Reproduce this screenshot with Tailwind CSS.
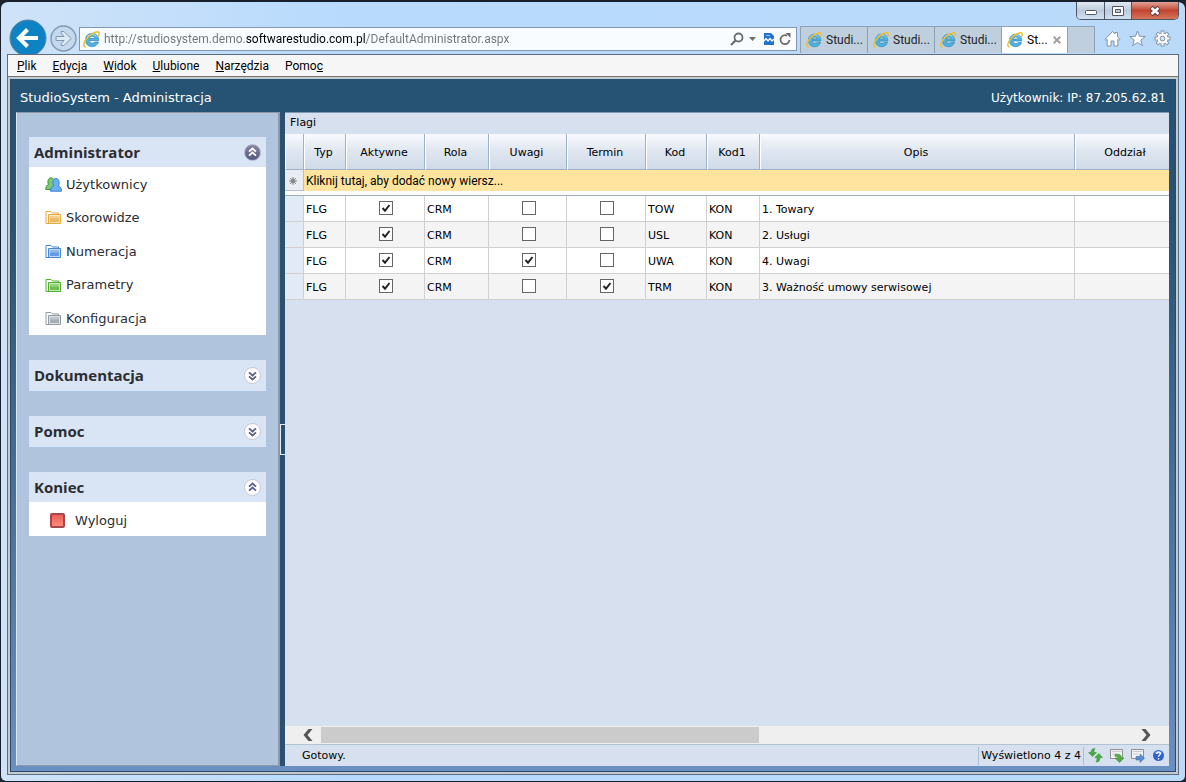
<!DOCTYPE html>
<html lang="pl">
<head>
    <meta charset="UTF-8">
    <meta name="viewport" content="width=device-width, initial-scale=1.0">
    <title>StudioSystem - Administracja</title>
    <script src="https://cdn.jsdelivr.net/npm/@tailwindcss/browser@4"></script>
</head>
<body class="bg-[#1c2430] font-['DejaVu_Sans',Verdana,sans-serif] text-[11px] text-black">

    <!-- shared icons -->
    <svg class="hidden">
        <symbol id="ie" viewBox="0 0 16 16">
            <path d="M8.600 2.200c3.700 0 6.200 2.600 6.200 6.800H6c.2 1.700 1.300 2.500 2.800 2.500 1.100 0 1.900-.4 2.400-1.100h3.300c-.8 2.700-3 4.300-5.900 4.300-3.700 0-6.200-2.500-6.200-6.200s2.500-6.300 6.200-6.300zM6.100 7h5.100c-.2-1.300-1.200-2.100-2.500-2.100S6.400 5.700 6.100 7z" fill="#4fb2e0" stroke="#2f86b8" stroke-width=".7"/>
            <path d="M4 5.500C5.200 4 6.700 3.200 8.600 3.200s3.500.8 4.400 2.300" fill="none" stroke="#9bdcf6"/>
            <path d="M2.600 15C-.6 14.600.8 9.400 5.200 5.200 9.400 1.200 14.600-.4 15.200 1.800c.3 1-.2 2.200-.9 3.400" fill="none" stroke="#f0c030" stroke-width="1.500"/>
        </symbol>
        <symbol id="folder" viewBox="0 0 17 15">
            <path d="M1 13.500V1.500h5l1.500 1.500h6V5" fill="#fff" fill-opacity=".5" stroke="currentColor"/>
            <path d="M3.500 13.500v-9h12v9H1" fill="currentColor" fill-opacity=".3" stroke="currentColor"/>
            <rect x="5" y="6" width="9" height="6" fill="currentColor" fill-opacity=".75"/>
            <path d="M5 6h9v2.500H5z" fill="#fff" fill-opacity=".3"/>
        </symbol>
        <symbol id="up" viewBox="0 0 9 10">
            <path d="M1 4.600 4.500 1.500 8 4.600M1 8.600 4.500 5.500 8 8.600" fill="none" stroke="currentColor" stroke-width="1.700"/>
        </symbol>
        <symbol id="down" viewBox="0 0 9 10">
            <path d="M1 1.400 4.500 4.500 8 1.400M1 5.400 4.500 8.500 8 5.400" fill="none" stroke="currentColor" stroke-width="1.700"/>
        </symbol>
    </svg>

    <div class="relative flex h-screen flex-col rounded-t-lg rounded-b-md border border-t-2 border-[#17202c] bg-linear-to-r from-[#cfe3f8] via-[#b7dafd] via-30% to-[#bbdafa] px-[6px] pb-[6px] font-normal">

        <!-- window buttons -->
        <div class="absolute right-[6px] top-0 flex h-[18px] overflow-hidden rounded-b-[5px] border border-t-0 border-[#4b5667]">
            <button aria-label="Minimalizuj" class="flex w-[28px] items-center justify-center border-r border-[#4b5667] bg-linear-to-b from-[#e1e9f2] via-[#bccbdc] to-[#d2e1f1]">
                <svg class="size-3" viewBox="0 0 12 12"><rect x=".5" y="5.500" width="11" height="4" rx="1" fill="#fff" stroke="#535666"/></svg>
            </button>
            <button aria-label="Maksymalizuj" class="flex w-[27px] items-center justify-center border-r border-[#4b5667] bg-linear-to-b from-[#e1e9f2] via-[#bccbdc] to-[#d2e1f1]">
                <svg class="size-3" viewBox="0 0 12 12"><path d="M.5 1.500h11v9H.5zM3.500 4.500h5v3h-5z" fill="#fff" fill-rule="evenodd" stroke="#535666"/></svg>
            </button>
            <button aria-label="Zamknij" class="flex w-[46px] items-center justify-center bg-linear-to-b from-[#dea296] via-[#c24430] to-[#d5755a]">
                <svg class="size-3" viewBox="0 0 12 12"><path d="M2 2.500l8 7M10 2.500l-8 7" stroke="#5a3a44" stroke-width="4.400"/><path d="M2.500 3l7 6M9.500 3l-7 6" stroke="#fff" stroke-width="2.600"/></svg>
            </button>
        </div>

        <!-- navigation row -->
        <header class="flex h-[52px] shrink-0 items-end font-[Roboto,'Open_Sans',sans-serif] text-xs">
            <button aria-label="Wstecz" class="ml-[2px] h-[35px] w-[38px] shrink-0 overflow-hidden">
                <svg class="size-[38px]" viewBox="0 0 38 38"><circle cx="19" cy="19" r="18" fill="#0d83c3" stroke="#5b7f9d"/><path d="M29 19H11M18.500 10.500 10 19l8.500 8.500" fill="none" stroke="#fff" stroke-width="4"/></svg>
            </button>
            <button aria-label="Dalej" class="ml-[3px] mb-[2px] shrink-0">
                <svg class="size-[27px]" viewBox="0 0 27 27"><circle cx="13.500" cy="13.500" r="12.500" fill="#c5d9ee" stroke="#8298b0" stroke-width="1.400"/><path d="M6 11.500h8L11 8V6.500h3l7 7-7 7h-3V19l3-3.500H6z" fill="#dce9f6" stroke="#8298b0"/></svg>
            </button>
            <div class="ml-[2px] mb-[3px] flex h-6 flex-1 items-center border border-[#8398b0] bg-[#f8fcff] pl-[3px] pr-[5px]">
                <svg class="size-[17px]"><use href="#ie"/></svg>
                <input aria-label="Adres" value="http://studiosystem.demo.softwarestudio.com.pl/DefaultAdministrator.aspx" class="ml-1 min-w-0 flex-1 bg-[linear-gradient(90deg,#747474_142px,#000_142px,#000_262px,#747474_262px)] bg-clip-text text-transparent outline-none">
                <button aria-label="Szukaj"><svg class="size-[14px]" viewBox="0 0 14 14"><circle cx="8.500" cy="5.500" r="4" fill="none" stroke="#6d6d6d" stroke-width="1.800"/><path d="M5.500 8.500 1 13" stroke="#6d6d6d" stroke-width="2.200"/></svg></button>
                <button aria-label="Historia" class="ml-[5px]"><svg class="h-1 w-[7px]" viewBox="0 0 7 4"><path d="M0 0h7L3.500 4z" fill="#6d6d6d"/></svg></button>
                <button aria-label="Widok zgodności" class="ml-2"><svg class="h-3 w-[10px]" viewBox="0 0 10 12"><path d="M0 0h7l3 3v9H0z" fill="#2173cf"/><path d="M2 2.500h4" stroke="#9cc8f5"/><path d="M0 8l2-2.500 2 2.500 2-2.500 2 2.500 2-2" fill="none" stroke="#fff" stroke-width="1.300"/></svg></button>
                <button aria-label="Odśwież" class="ml-[5px]"><svg class="size-3" viewBox="0 0 12 12"><path d="M10.500 7A4.500 4.500 0 1 1 8 2.600" fill="none" stroke="#6d6d6d" stroke-width="1.800"/><path d="M6.500 0h5v5z" fill="#6d6d6d"/></svg></button>
            </div>
            <nav class="ml-[3px] flex h-[28px] shrink-0 pb-px text-[#222]">
                <button class="flex w-[67px] items-center gap-1 border border-r-0 border-b-0 border-[#8ea2b7] bg-[#bfcfde] pl-[5px]"><svg class="size-4 shrink-0"><use href="#ie"/></svg>Studi...</button>
                <button class="flex w-[67px] items-center gap-1 border border-r-0 border-b-0 border-[#8ea2b7] bg-[#bfcfde] pl-[5px]"><svg class="size-4 shrink-0"><use href="#ie"/></svg>Studi...</button>
                <button class="flex w-[67px] items-center gap-1 border border-r-0 border-b-0 border-[#8ea2b7] bg-[#bfcfde] pl-[5px]"><svg class="size-4 shrink-0"><use href="#ie"/></svg>Studi...</button>
                <button class="flex w-[66px] items-center gap-1 border border-r-0 border-b-0 border-[#8ea2b7] bg-white pl-[5px] text-black"><svg class="size-4 shrink-0"><use href="#ie"/></svg>St...<svg class="ml-auto mr-[6px] size-2" viewBox="0 0 8 8"><path d="M.7.7l6.600 6.600M7.300.7.7 7.300" stroke="#a0a0a0" stroke-width="2"/></svg></button>
                <button aria-label="Nowa karta" class="w-7 border border-b-0 border-[#8ea2b7] bg-[#bfcfde]"></button>
            </nav>
            <div class="mb-[7px] ml-[9px] mr-[8px] flex shrink-0 gap-2">
                <button aria-label="Strona główna"><svg class="size-[17px]" viewBox="0 0 17 17"><path d="M1 9.500 8.500 1.500l2.500 2.600V2.500h2.500v4.300L16 9.500l-1 .9-1.200-1V16H10v-5H7v5H3.200V9.400l-1.200 1z" fill="#fff" stroke="#8293a6"/></svg></button>
                <button aria-label="Ulubione"><svg class="size-[17px]" viewBox="0 0 17 17"><path d="M8.500 1l2 5.300 5.800.2-4.500 3.600 1.600 5.600-4.900-3.200-4.900 3.200 1.600-5.600L.7 6.500l5.800-.2z" fill="#fff" stroke="#8293a6"/></svg></button>
                <button aria-label="Narzędzia"><svg class="size-[17px]" viewBox="0 0 17 17"><path d="M8.500 .5v16M.5 8.500h16M2.800 2.800l11.400 11.400M14.200 2.800 2.800 14.200" stroke="#8293a6" stroke-width="3.800"/><circle cx="8.500" cy="8.500" r="5.400" fill="#fff" stroke="#8293a6"/><path d="M8.500 1.500v14M1.500 8.500h14M3.500 3.500l10 10M13.500 3.500l-10 10" stroke="#fff" stroke-width="2"/><circle cx="8.500" cy="8.500" r="2.400" fill="#d5e3f2" stroke="#8293a6"/></svg></button>
            </div>
        </header>

        <div class="flex min-h-0 flex-1 flex-col border border-[#5c6d80] bg-[#f6f6f7]">
            <nav class="flex h-[22px] shrink-0 items-center gap-4 border-b border-[#73736e] pl-[9px] font-[Roboto,'Open_Sans',sans-serif] text-xs">
                <a href="#"><u>P</u>lik</a>
                <a href="#"><u>E</u>dycja</a>
                <a href="#"><u>W</u>idok</a>
                <a href="#"><u>U</u>lubione</a>
                <a href="#"><u>N</u>arzędzia</a>
                <a href="#">Pomo<u>c</u></a>
            </nav>

            <div class="flex min-h-0 flex-1 flex-col border-2 border-[#c3cbd0] bg-linear-to-b from-[#265373] from-20% to-[#6a8fc2]">
                <div class="flex min-h-0 flex-1 flex-col border border-t-0 border-[#2d4a66]">
                    <div class="flex h-[33px] shrink-0 items-center justify-between px-[9px] pt-1 text-white">
                        <h1 class="text-[13px]">StudioSystem - Administracja</h1>
                        <span class="text-xs">Użytkownik: IP: 87.205.62.81</span>
                    </div>

                    <div class="flex min-h-0 flex-1 pb-[5px] pl-[5px] pr-[6px]">
                        <!-- sidebar -->
                        <aside class="flex w-[264px] shrink-0 flex-col gap-[25px] border border-r-2 border-[#8d99aa] border-l-[#dfe8f2] bg-[#b0c4de] px-3 pt-6 text-[#2b2d33]">
                            <section>
                                <div class="flex h-[30px] items-center justify-between bg-[#d9e4f4] px-[5px]">
                                    <h2 class="font-['Open_Sans','Noto_Sans',sans-serif] text-[15px] font-bold">Administrator</h2>
                                    <button aria-label="Zwiń Administrator" class="flex size-[17px] items-center justify-center rounded-full border border-[#b5b7cc] bg-linear-to-b from-[#8587a3] to-[#55577e] text-white"><svg class="h-[10px] w-[9px]"><use href="#up"/></svg></button>
                                </div>
                                <ul class="grid h-[168px] grid-rows-5 bg-white pl-4 text-[13px]">
                                    <li><a href="#" class="flex h-full items-center gap-1 pt-px"><svg class="h-[15px] w-[17px]" viewBox="0 0 17 15"><path d="M.7 12.500c0-3 1.300-4.500 2.800-5C2 4 3.500.8 6 .8S10 4 8.500 7l1 5.500z" fill="#7bc96b" stroke="#3d9a3a"/><path d="M5.500 14.200c0-3.200 1.500-4.700 3-5.200C7 5.500 8 1.500 11 1.500S15 5.500 13.500 9c1.700.5 3 2 3 5.200z" fill="#6eb0f5" stroke="#3b82d6"/></svg>Użytkownicy</a></li>
                                    <li><a href="#" class="flex h-full items-center gap-1 pt-px"><svg class="h-[15px] w-[17px] text-[#e9a93c]"><use href="#folder"/></svg>Skorowidze</a></li>
                                    <li><a href="#" class="flex h-full items-center gap-1 pt-px"><svg class="h-[15px] w-[17px] text-[#4388d8]"><use href="#folder"/></svg>Numeracja</a></li>
                                    <li><a href="#" class="flex h-full items-center gap-1 pt-px"><svg class="h-[15px] w-[17px] text-[#50b02a]"><use href="#folder"/></svg>Parametry</a></li>
                                    <li><a href="#" class="flex h-full items-center gap-1 pt-px"><svg class="h-[15px] w-[17px] text-[#929ba6]"><use href="#folder"/></svg>Konfiguracja</a></li>
                                </ul>
                            </section>
                            <section class="flex h-[31px] items-center justify-between bg-[#d9e4f4] px-[5px]">
                                <h2 class="font-['Open_Sans','Noto_Sans',sans-serif] text-[15px] font-bold">Dokumentacja</h2>
                                <button aria-label="Rozwiń Dokumentacja" class="flex size-[17px] items-center justify-center rounded-full border border-[#c3c7d6] bg-white text-[#5a5f8c]"><svg class="h-[10px] w-[9px]"><use href="#down"/></svg></button>
                            </section>
                            <section class="flex h-[31px] items-center justify-between bg-[#d9e4f4] px-[5px]">
                                <h2 class="font-['Open_Sans','Noto_Sans',sans-serif] text-[15px] font-bold">Pomoc</h2>
                                <button aria-label="Rozwiń Pomoc" class="flex size-[17px] items-center justify-center rounded-full border border-[#c3c7d6] bg-white text-[#5a5f8c]"><svg class="h-[10px] w-[9px]"><use href="#down"/></svg></button>
                            </section>
                            <section>
                                <div class="flex h-[30px] items-center justify-between bg-[#d9e4f4] px-[5px]">
                                    <h2 class="font-['Open_Sans','Noto_Sans',sans-serif] text-[15px] font-bold">Koniec</h2>
                                    <button aria-label="Zwiń Koniec" class="flex size-[17px] items-center justify-center rounded-full border border-[#c3c7d6] bg-white text-[#5a5f8c]"><svg class="h-[10px] w-[9px]"><use href="#up"/></svg></button>
                                </div>
                                <a href="#" class="flex h-[34px] items-center gap-[10px] bg-white pl-[21px] pt-[3px] text-[13px]"><span class="size-[15px] rounded-xs border-2 border-[#a8474a] bg-linear-to-b from-[#e8605a] to-[#ff8a78]"></span>Wyloguj</a>
                            </section>
                        </aside>

                        <!-- splitter -->
                        <div class="flex w-[5px] shrink-0 items-center bg-[#2c5170]">
                            <div class="h-[31px] w-full border border-r-0 border-[#e5ecf2]"></div>
                        </div>

                        <!-- grid -->
                        <main class="flex min-w-0 flex-1 flex-col border-t border-[#7f98b4] bg-[#d7e0ee]">
                            <div class="flex h-[21px] shrink-0 items-center pl-[5px]">Flagi</div>
                            <div class="min-h-0 flex-1 overflow-hidden">
                                <table class="w-full min-w-[893px] table-fixed border-separate border-spacing-0 text-left">
                                    <colgroup>
                                        <col class="w-[19px]"><col class="w-[42px]"><col class="w-[79px]"><col class="w-[64px]"><col class="w-[78px]"><col class="w-[79px]"><col class="w-[61px]"><col class="w-[53px]"><col class="w-[315px]"><col>
                                    </colgroup>
                                    <thead>
                                        <tr class="h-9 text-center *:border-r *:border-b *:border-l *:border-l-white *:border-[#9fb2c4] *:bg-linear-to-b *:from-[#f8fafd] *:via-[#dfe6f0] *:to-[#cfdae8] *:p-0 *:pt-[3px] *:pr-[3px] *:font-normal">
                                            <th></th><th>Typ</th><th>Aktywne</th><th>Rola</th><th>Uwagi</th><th>Termin</th><th>Kod</th><th>Kod1</th><th>Opis</th><th>Oddział</th>
                                        </tr>
                                        <tr class="h-[21px]">
                                            <td class="border-r border-b border-[#b4c0cd] bg-[#e9edf3] p-0 pr-[2px] pt-[2px]">
                                                <svg class="mx-auto size-2" viewBox="0 0 8 8"><circle cx="4" cy="4" r="2.400" fill="#8a8a8a"/><path d="M4 0v8M0 4h8M1 1l6 6M7 1 1 7" stroke="#8a8a8a"/></svg>
                                            </td>
                                            <td colspan="9" class="bg-[#ffe4a0] p-0 pl-[2px] pt-px font-[Roboto,'Open_Sans',sans-serif] text-xs leading-4">Kliknij tutaj, aby dodać nowy wiersz...</td>
                                        </tr>
                                        <tr class="h-[5px]"><td colspan="10" class="border-b border-[#9fadb5] bg-[#fbfcfa] p-0"></td></tr>
                                    </thead>
                                    <tbody id="rows"></tbody>
                                </table>
                            </div>

                            <div class="flex h-[18px] shrink-0 items-center bg-[#efefef]">
                                <button aria-label="Przewiń w lewo" class="flex w-9 justify-end pr-2"><svg class="h-3 w-[10px]" viewBox="0 0 10 12"><path d="M5.500 0H9.500L4.500 6l5 6H5.500L.5 6z" fill="#555"/></svg></button>
                                <div class="h-[16px] flex-1"><div class="h-full w-[54%] bg-[#cbcbcb]"></div></div>
                                <button aria-label="Przewiń w prawo" class="flex w-9 pl-2"><svg class="h-3 w-[10px]" viewBox="0 0 10 12"><path d="M4.500 0H.5L5.500 6l-5 6h4L9.500 6z" fill="#555"/></svg></button>
                            </div>

                            <footer class="flex h-[22px] shrink-0 items-center justify-between border-t border-[#b3c3d6] pl-[17px] pr-[3px]">
                                <span class="pt-px">Gotowy.</span>
                                <div class="flex h-[18px] items-center">
                                    <span class="flex h-full items-center border-x border-[#a9bfd9] px-[2px] pt-px">Wyświetlono 4 z 4</span>
                                    <div class="ml-1 flex gap-[6px]">
                                        <button aria-label="Odśwież dane"><svg class="size-[15px]" viewBox="0 0 15 15"><path d="M7 .5C4 .5 3 2 3 4.500H.5l4 4 4-4H6C6 2.500 6.200 1.500 7 .5zM8 14c3 0 4-1.500 4-4.500h2.500l-3.700-4-4 4H9c0 2-.2 3.500-1 4.500z" fill="#4aad40" stroke="#2d8a2c" stroke-width=".5"/></svg></button>
                                        <button aria-label="Eksportuj"><svg class="size-[15px]" viewBox="0 0 15 15"><path d="M1.500 10.500v-9h12v9z" fill="#f1f1f1" stroke="#8d9093"/><path d="M3 3.500h9M3 6h5" stroke="#c9cccf"/><path d="M6 6.500c4-1 6.500 0 6.500 3.500H15l-4.500 4.500L6 10h2.800c0-1.500-1-2-2.800-1.500z" fill="#56aa45" stroke="#2f8030" stroke-width=".5"/></svg></button>
                                        <button aria-label="Wyślij"><svg class="size-[15px]" viewBox="0 0 15 15"><path d="M1.500 10.500v-9h12v9z" fill="#f1f1f1" stroke="#8d9093"/><path d="M3 3.500h9M3 6h5" stroke="#c9cccf"/><path d="M6 8.500h4V6l4.500 4.200L10 14.500V12H6z" fill="#5a8ed2" stroke="#37619e" stroke-width=".5"/></svg></button>
                                        <button aria-label="Pomoc"><svg class="size-[15px]" viewBox="0 0 15 15"><circle cx="7.500" cy="7.500" r="5.500" fill="#2e62d2"/><path d="M3.500 5.500a4.500 4.500 0 0 1 8 0z" fill="#86adf2"/><path d="M5.700 6c0-2.600 3.800-2.400 3.600-.3C9.200 7 7.500 7 7.500 8.800M7.500 10v1.400" fill="none" stroke="#fff" stroke-width="1.400"/></svg></button>
                                    </div>
                                </div>
                            </footer>
                        </main>
                    </div>
                </div>
            </div>
        </div>
    </div>

    <script>
        const flags = [
            { aktywne: true, uwagi: false, termin: false, kod: "TOW", opis: "1. Towary" },
            { aktywne: true, uwagi: false, termin: false, kod: "USL", opis: "2. Usługi" },
            { aktywne: true, uwagi: true, termin: false, kod: "UWA", opis: "4. Uwagi" },
            { aktywne: true, uwagi: false, termin: true, kod: "TRM", opis: "3. Ważność umowy serwisowej" }
        ];

        function checkbox(label, on) {
            return `<td><label class="relative mx-auto -mt-[5px] block size-[14px]">
                <input type="checkbox" aria-label="${label}" ${on ? "checked" : ""} class="peer block size-[14px] appearance-none border border-[#666] bg-white">
                <svg class="pointer-events-none absolute inset-0 hidden size-[14px] peer-checked:block" viewBox="0 0 14 14"><path d="M3.500 7 6 9.700 10.500 4" fill="none" stroke="#222" stroke-width="1.900"/></svg>
            </label></td>`;
        }

        document.getElementById("rows").innerHTML = flags.map(f => `
            <tr class="h-[26px] bg-white even:bg-[#f4f4f4] *:border-r *:border-b *:border-[#d0d0d0] *:p-0 *:pl-[2px] *:pt-[3px]">
                <td class="bg-[#e2eaf6]"></td>
                <td>FLG</td>
                ${checkbox("Aktywne", f.aktywne)}
                <td>CRM</td>
                ${checkbox("Uwagi", f.uwagi)}
                ${checkbox("Termin", f.termin)}
                <td>${f.kod}</td>
                <td>KON</td>
                <td>${f.opis}</td>
                <td></td>
            </tr>`).join("");
    </script>
</body>
</html>
